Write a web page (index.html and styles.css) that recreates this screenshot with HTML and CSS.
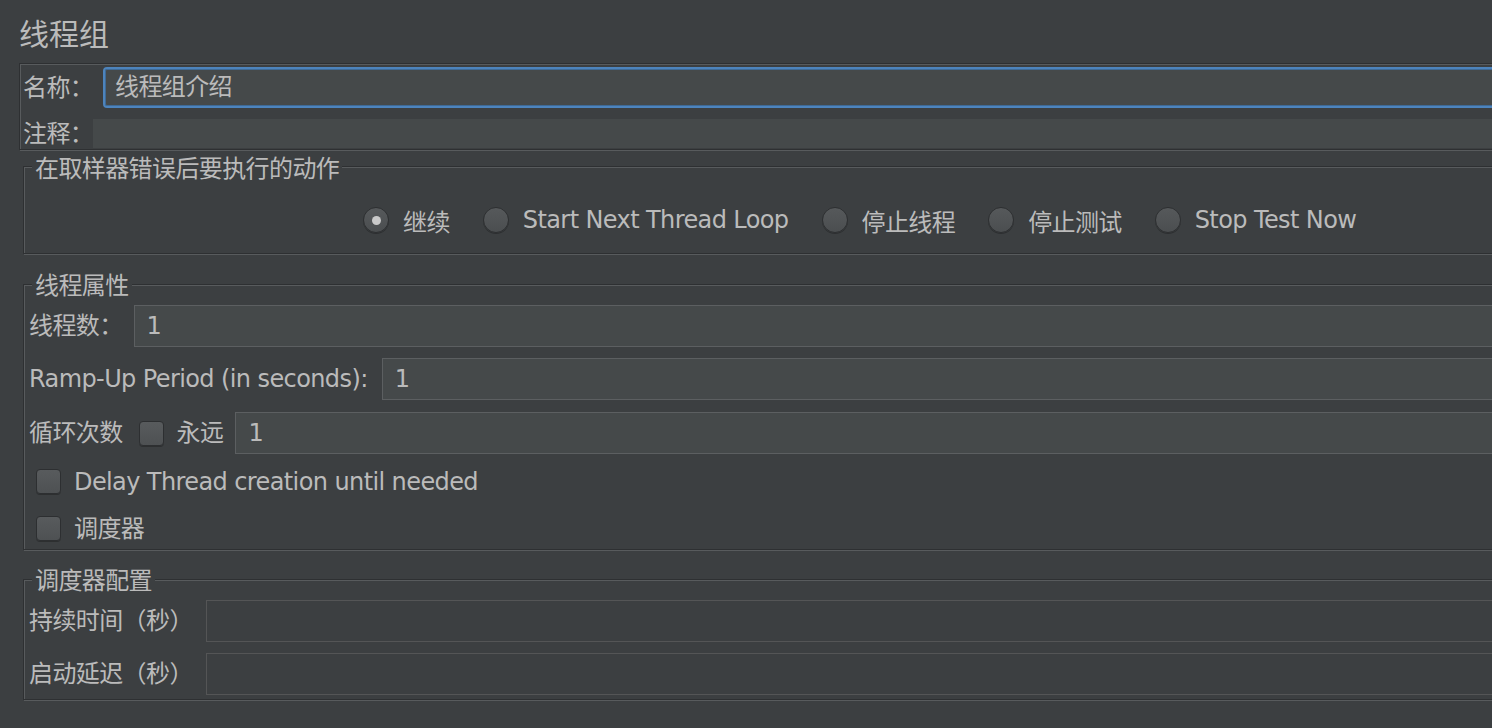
FILE: index.html
```html
<!DOCTYPE html>
<html lang="zh-CN">
<head>
    <meta charset="UTF-8">
    <meta name="viewport" content="width=device-width, initial-scale=1.0">
    <title>线程组</title>
    <link rel="stylesheet" href="styles.css">
</head>
<body>
    <div class="page">
        <h1 class="page-title">线程组</h1>

        <!-- name / comment -->
        <div class="name-panel">
            <div class="name-row">
                <span class="label name-label">名称：</span>
                <div class="field focused">线程组介绍</div>
            </div>
            <div class="comment-row">
                <span class="label comment-label">注释：</span>
                <div class="comment-area"></div>
            </div>
        </div>

        <!-- on sampler error -->
        <div class="group error-group">
            <div class="group-title">在取样器错误后要执行的动作</div>
            <div class="radio-row">
                <label class="radio-item"><span class="radio checked"></span>继续</label>
                <label class="radio-item"><span class="radio"></span>Start Next Thread Loop</label>
                <label class="radio-item"><span class="radio"></span>停止线程</label>
                <label class="radio-item"><span class="radio"></span>停止测试</label>
                <label class="radio-item"><span class="radio"></span>Stop Test Now</label>
            </div>
        </div>

        <!-- thread properties -->
        <div class="group thread-group">
            <div class="group-title">线程属性</div>
            <div class="form-row first">
                <span class="label">线程数：</span>
                <div class="field threads-field">1</div>
            </div>
            <div class="form-row">
                <span class="label">Ramp-Up Period (in seconds):</span>
                <div class="field ramp-field">1</div>
            </div>
            <div class="form-row loop-row">
                <span class="label">循环次数</span>
                <span class="checkbox loop-check"></span>
                <span class="label forever-label">永远</span>
                <div class="field loop-field">1</div>
            </div>
            <div class="check-row delay-row">
                <span class="checkbox"></span>
                <span class="label">Delay Thread creation until needed</span>
            </div>
            <div class="check-row scheduler-row">
                <span class="checkbox"></span>
                <span class="label">调度器</span>
            </div>
        </div>

        <!-- scheduler config -->
        <div class="group scheduler-group">
            <div class="group-title">调度器配置</div>
            <div class="form-row first">
                <span class="label">持续时间（秒）</span>
                <div class="field disabled sched-field"></div>
            </div>
            <div class="form-row">
                <span class="label">启动延迟（秒）</span>
                <div class="field disabled sched-field"></div>
            </div>
        </div>
    </div>
</body>
</html>
```

FILE: styles.css
```css
html, body {
    margin: 0;
    padding: 0;
    background-color: #3c3f41;
}

body {
    width: 1492px;
    height: 728px;
    overflow: hidden;
    font-family: "DejaVu Sans", "Noto Sans CJK SC", sans-serif;
    font-size: 24px;
    letter-spacing: -0.6px;
    color: #bbbbbb;
}

.page {
    display: flex;
    flex-direction: column;
}

.page-title {
    margin: 0;
    padding: 7px 0 0 19px;
    height: 56px;
    line-height: 56px;
    font-size: 30px;
    font-weight: normal;
    letter-spacing: 0;
    color: #bbbbbb;
}

.label {
    white-space: nowrap;
    line-height: 28px;
}

/* etched borders */
.name-panel,
.group {
    border: 1px solid #2e3032;
    box-shadow: inset 1px 1px 0 #585b5d, 1px 1px 0 #585b5d;
    margin-right: -40px;
}

.name-panel {
    margin-left: 19px;
    padding: 3px 0 1px 3px;
}

.name-row {
    display: flex;
    align-items: center;
    height: 41px;
}

.name-label {
    width: 80px;
}

.field {
    flex: 1;
    box-sizing: border-box;
    height: 42px;
    line-height: 40px;
    padding: 0 12px;
    background-color: #45494a;
    border: 1px solid #5c5f61;
    color: #bbbbbb;
}

.field.focused {
    height: 41px;
    line-height: 37px;
    padding-left: 10px;
    border: 2px solid #4d84bd;
    border-radius: 4px;
    box-shadow: inset 0 0 0 1px #3f6a96;
}

.field.disabled {
    background-color: #3c3f41;
    border-color: #545556;
}

.comment-row {
    display: flex;
    align-items: center;
    height: 29px;
    margin-top: 11px;
}

.comment-label {
    width: 70px;
}

.comment-area {
    flex: 1;
    height: 29px;
    background-color: #45494a;
}

/* titled groups */
.group {
    margin-left: 23px;
    padding: 0 0 0 5px;
}

.group-title {
    width: fit-content;
    margin-left: 3px;
    padding: 0 3px;
    line-height: 24px;
    background-color: #3c3f41;
    white-space: nowrap;
}

.error-group {
    margin-top: 16px;
    padding-bottom: 20px;
}

.error-group .group-title {
    margin-top: -10px;
}

.radio-row {
    display: flex;
    align-items: center;
    gap: 33px;
    padding: 26px 0 0 334px;
    height: 26px;
}

.radio-item {
    display: flex;
    align-items: center;
    gap: 14px;
    white-space: nowrap;
}

.radio {
    box-sizing: border-box;
    width: 26px;
    height: 26px;
    border-radius: 50%;
    border: 1px solid #2d2f31;
    background: linear-gradient(#56595b, #4b4e50);
    box-shadow: 0 1px 0 rgba(0, 0, 0, 0.25);
    display: flex;
    align-items: center;
    justify-content: center;
}

.radio.checked::after {
    content: "";
    width: 9px;
    height: 9px;
    border-radius: 50%;
    background-color: #c9c9c9;
}

.checkbox {
    box-sizing: border-box;
    flex: none;
    width: 25px;
    height: 25px;
    border-radius: 4px;
    border: 1px solid #2d2f31;
    background: linear-gradient(#585b5d, #4e5153);
    box-shadow: 0 1px 0 rgba(0, 0, 0, 0.25);
}

.thread-group {
    margin-top: 30px;
    padding-bottom: 8px;
}

.thread-group .group-title {
    margin-top: -11px;
}

.form-row {
    display: flex;
    align-items: center;
    height: 42px;
    margin-top: 11px;
}

.form-row.first {
    margin-top: 7px;
}

.form-row.loop-row {
    margin-top: 12px;
}

.threads-field {
    margin-left: 11px;
}

.ramp-field {
    margin-left: 14px;
}

.loop-check {
    margin-left: 16px;
}

.forever-label {
    margin-left: 13px;
}

.loop-field {
    margin-left: 12px;
}

.check-row {
    display: flex;
    align-items: center;
    gap: 13px;
    height: 25px;
    padding-left: 7px;
}

.delay-row {
    margin-top: 15px;
}

.scheduler-row {
    margin-top: 22px;
}

.scheduler-group {
    margin-top: 29px;
    padding-bottom: 4px;
}

.scheduler-group .group-title {
    margin-top: -11px;
}

.sched-field {
    margin-left: 13px;
}
```
